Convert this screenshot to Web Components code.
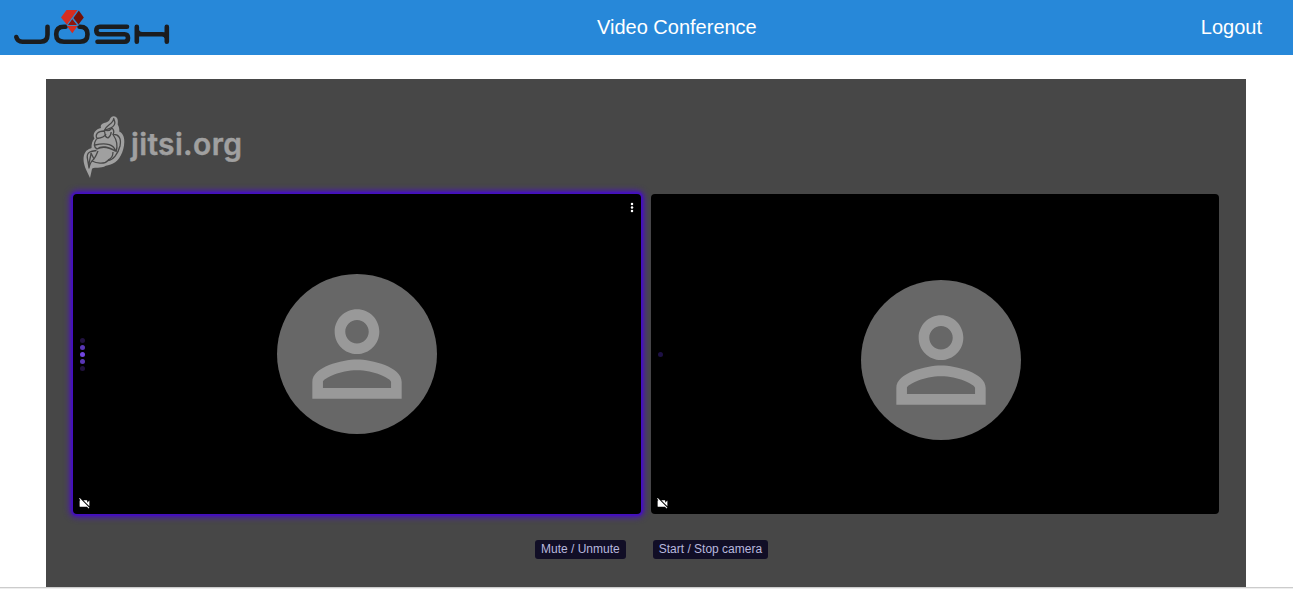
<!DOCTYPE html>
<html lang="en"><head><meta charset="utf-8"><title>Video Conference</title>
<style>html,body{margin:0;height:589px;overflow:hidden;background:#fff;font-family:"Liberation Sans",Arial,sans-serif}</style></head>
<body><conference-app></conference-app>
<script>
const define=(name,html)=>customElements.define(name,class extends HTMLElement{
  constructor(){super();const t=document.createElement('template');t.innerHTML=html;this.attachShadow({mode:'open'}).append(t.content.cloneNode(true));}
});
define('josh-logo',`<style>:host{display:block;width:158px;height:38px}svg{display:block}</style>
<svg width="158" height="38" viewBox="13 8 158 38">
<g fill="none" stroke="#1b1c1e" stroke-width="4.600" stroke-linecap="round" stroke-linejoin="round">
<path d="M16.300 37C17 40 19 41.700 22.500 41.700H40.500Q47.500 41.700 47.500 34.800V26.800"/>
<path d="M65.500 26.700H64Q56.200 26.700 56.200 34.200T64 41.700H80Q87.500 41.700 87.500 34.200T80 26.700H79.500"/>
<path d="M127 26.700H100Q96.300 26.700 96.300 30.450T100 34.200H124.500Q128 34.200 128 37.950T124.500 41.700H97.500"/>
<path d="M136.800 26.800V41.800M166.800 26.800V41.800M137 31Q138 34.300 142 34.300H162Q166 34.300 166.800 38"/></g>
<path fill="#d62d20" d="M66.500 10H77.500L67 24.800 61 17.500Z"/><path fill="#741108" d="M78.800 10.500 83.800 17.500 78.500 24.500 73.400 18Z"/><path fill="#8e160d" d="M72.300 19 77 25H67.800Z"/><path fill="#d62d20" d="M67 26H77.500L72.300 33.200Z"/>
<path d="M78.200 10 67 25.500H78.500M72.500 18.400 78 25.500" fill="none" stroke="#4b83b8" stroke-width=".8"/></svg>`);
define('top-bar',`<style>:host{display:grid;grid-template-columns:584px auto 1fr;align-items:center;height:55px;box-sizing:border-box;padding:0 31px 1px 13px;background:#2788d9;color:#fff;font-size:20px;line-height:24px}
.out{justify-self:end}</style>
<josh-logo></josh-logo><span class="title"><slot name="title"></slot></span><span class="out"><slot name="action"></slot></span>`);
define('jitsi-logo',`<style>:host{display:block;width:168px;height:64px}svg{display:block}text{font:600 30px Inter,"Open Sans",sans-serif}</style>
<svg width="168" height="64" viewBox="82 115 168 64">
<path fill="#a0a0a0" d="M110.500 118Q112 115.500 115 116.500C118 117.500 118.200 121 117.700 124.500 119 127 119.700 129.500 119.200 131.500 122 132.500 124.500 136 124.300 142 124 152 119 161 113 163.500 110 165 106 165.300 104 166.700 98 168.500 93.500 166.700 92 169L90 178 86 169.500C83.500 163.500 82.800 158 84.400 154 86 150 89 149 91.500 148 91.500 144 92 141 94.500 138.500 91.800 133.500 96 129 101 128 99.800 124 103.500 123 106 122.500 109.500 121.500 109.500 119.500 110.500 118Z"/>
<g fill="none" stroke="#484848" stroke-width="1.300" stroke-linejoin="round">
<path d="M113.700 118.500C113.500 124 106 125 104.300 130.500 108 128 114 129 114.900 123 114.700 121 114.300 120 113.700 118.500Z"/>
<path d="M104.500 131C97 131 95 135 97 138.500 101 138 105 136 106 134M104.500 131 105 134Q105 137 108 138 111 136 111.200 132M112 128Q115 131 113 134.500C119 134 121.500 139 120 146 118 154 113 160 108 160.500 104 165 96 163 92 161"/>
<path d="M96.500 139C93 144 94 147 97 149 102 145 108 147 115.500 151 114 145 107 142 95 145M113 134.500Q119 143 116 152M97 149Q105 145 115 151"/>
<path d="M96.500 150.500C91 151 86 152 87.500 159L89 168Q90 162 94 159L91 153M89 168C88 162 91 158 91 153M94 159Q96 156 98 151M108 160Q113 158 113 152M104.500 130Q109 132 112 128"/></g>
<text x="131" y="154.500" textLength="111" lengthAdjust="spacing" fill="#a0a0a0" stroke="#a0a0a0" stroke-width=".4" stroke-linejoin="round">jitsi.org</text></svg>`);
define('person-avatar',`<style>:host{display:grid;place-items:center;width:160px;height:160px;border-radius:50%;background:#676767}svg{display:block}</style>
<svg width="134" height="134" viewBox="0 0 24 24" fill="#999"><path d="M12 5.900c1.160 0 2.100.94 2.100 2.100s-.94 2.100-2.100 2.100S9.900 9.160 9.900 8s.94-2.100 2.100-2.100m0 9c2.970 0 6.100 1.460 6.100 2.100v1.100H5.900V17c0-.64 3.130-2.100 6.100-2.100M12 4C9.790 4 8 5.790 8 8s1.790 4 4 4 4-1.790 4-4-1.790-4-4-4zm0 9c-2.670 0-8 1.340-8 4v3h16v-3c0-2.660-5.330-4-8-4z"/></svg>`);
define('video-tile',`<style>:host{position:relative;display:grid;place-items:center;width:568px;height:320px;border-radius:4px;background:#000}
:host([active]){box-shadow:0 0 0 1px #4410be,0 0 2px 2px #4410be,0 0 6px 3px #4b10c4}
:host(:not([active])) person-avatar{margin:12px 0 0 12px}
:host(:not([active])) .menu,:host(:not([active])) .d{visibility:hidden}
.audio{position:absolute;left:7px;top:144px;display:grid;gap:2px}.audio i{width:5px;height:5px;border-radius:50%;background:#5936b5}.audio i.e{background:#21113f}.audio i.c{background:#7044df}
:host(:not([active])) .audio i.c{background:#1d1044}
.cam{position:absolute;left:5px;bottom:4px}.menu{position:absolute;right:3px;top:8px}</style>
<person-avatar></person-avatar><div class="audio"><i class="d e"></i><i class="d"></i><i class="c"></i><i class="d"></i><i class="d e"></i></div>
<svg class="menu" width="12" height="12" viewBox="0 0 12 12" fill="#fff"><circle cx="6" cy="2.100" r="1.250"/><circle cx="6" cy="5.500" r="1.250"/><circle cx="6" cy="8.900" r="1.250"/></svg>
<svg class="cam" width="13" height="13" viewBox="0 0 24 24" fill="#fff"><path d="M21 6.500l-4 4V7c0-.55-.45-1-1-1H9.820L21 17.180V6.500zM3.270 2L2 3.270 4.730 6H4c-.55 0-1 .45-1 1v10c0 .55.45 1 1 1h12c.21 0 .39-.08.54-.18L19.730 21 21 19.730 3.270 2z"/></svg>`);
define('control-button',`<style>:host{display:block}button{display:block;height:19px;border:0;border-radius:3px;margin:0;padding:0 6px 1px;background:#110e26;color:#b8b8de;font:12px/18px "Liberation Sans",Arial,sans-serif;white-space:nowrap}</style><button><slot></slot></button>`);
define('conference-app',`<style>:host{display:block;height:589px;overflow:hidden}
main{box-sizing:border-box;width:1200px;height:508px;margin:24px 0 0 46px;background:#474747;padding:36px 27px 0}
jitsi-logo{margin-left:9px}.tiles{display:flex;gap:10px;margin-top:15px}.controls{display:flex;gap:27px;margin:26px 0 0 462px}.line{height:1px;background:#ccc;border-bottom:1px solid #eee}</style>
<top-bar><span slot="title">Video Conference</span><span slot="action">Logout</span></top-bar>
<main><jitsi-logo></jitsi-logo><div class="tiles"><video-tile active></video-tile><video-tile></video-tile></div>
<div class="controls"><control-button>Mute / Unmute</control-button><control-button>Start / Stop camera</control-button></div></main><div class="line"></div>`);
</script></body></html>
